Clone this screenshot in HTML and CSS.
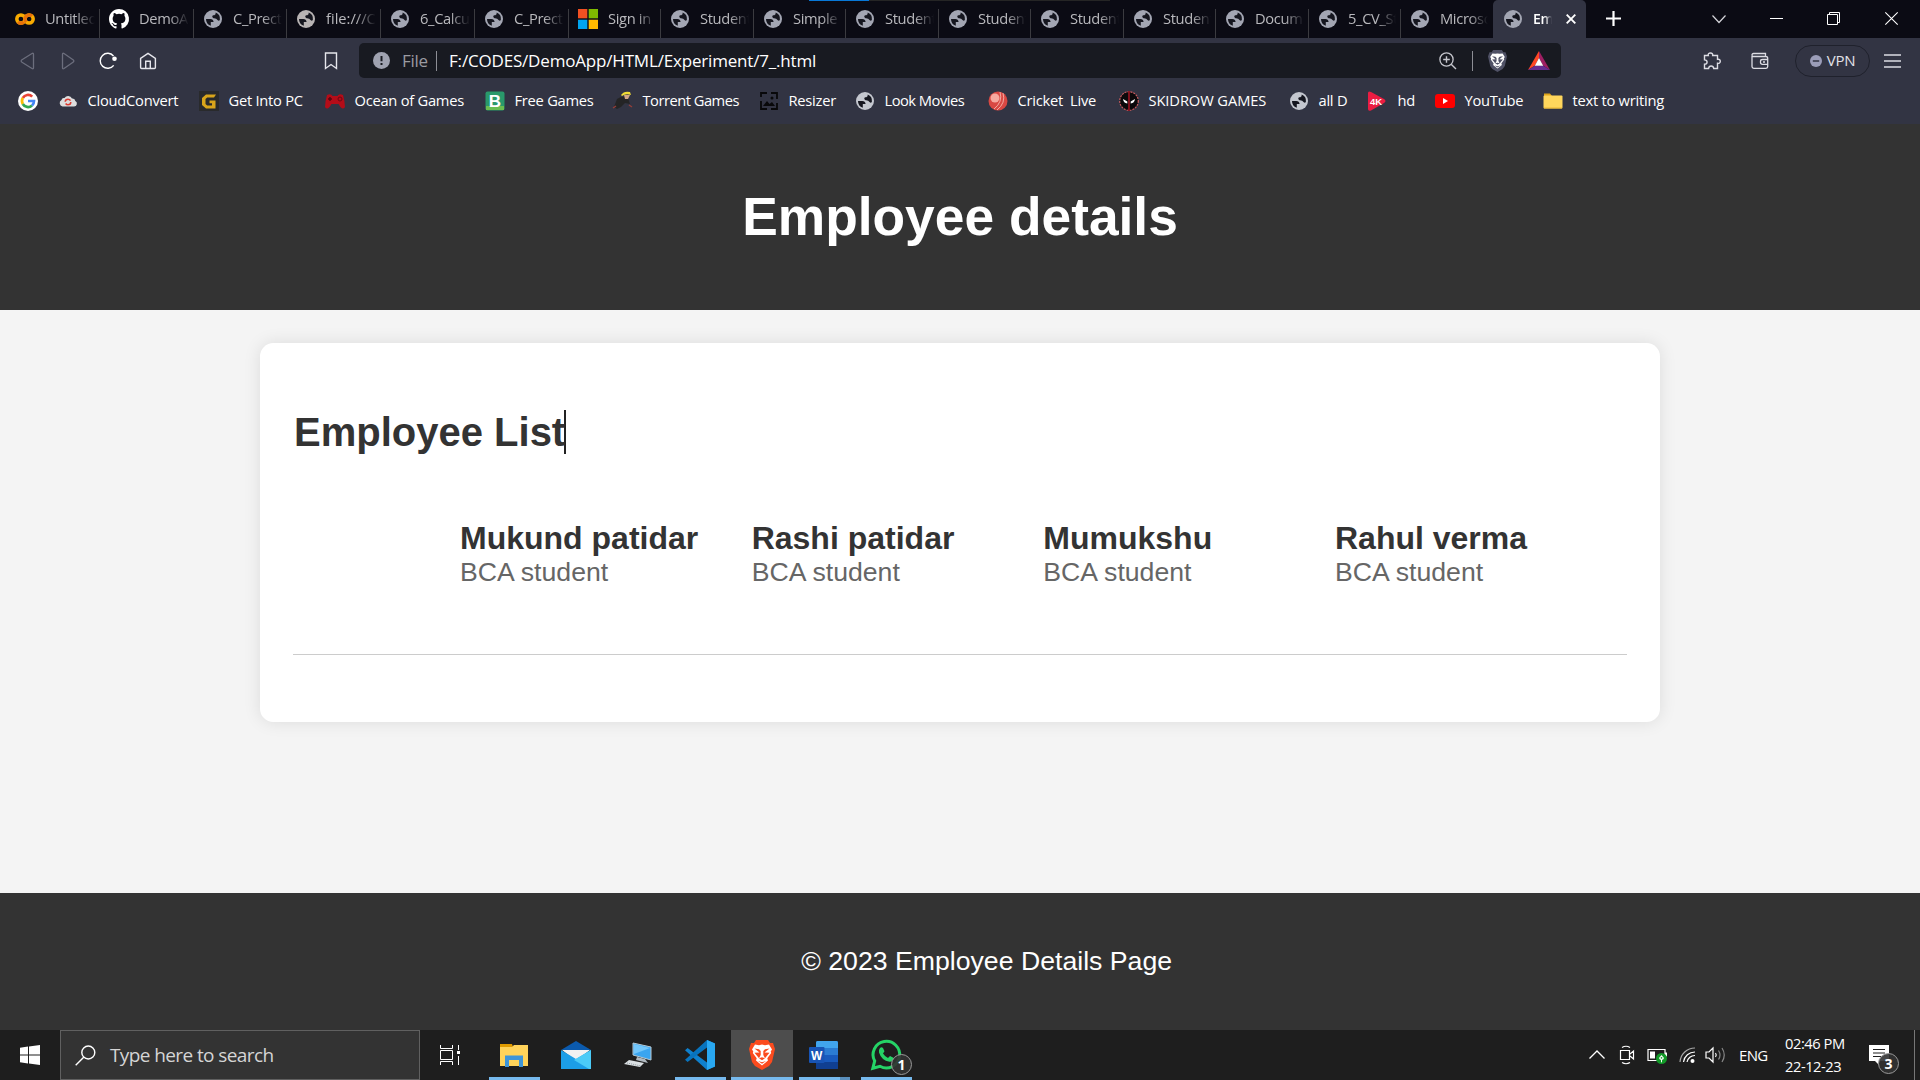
FILE: index.html
```html
<!DOCTYPE html>
<html lang="en">
<head>
<meta charset="utf-8">
<title>Employee details</title>
<link rel="stylesheet" href="styles.css">
</head>
<body>
<svg class="defs" aria-hidden="true">
  <symbol id="globe" viewBox="0 0 18 18">
    <circle cx="9" cy="9" r="9" fill="currentColor"/>
    <path class="globe-cut" d="M2 9H6.300Q9.300 9 9.600 12H6.800V15.700A7 7 0 0 1 2 9ZM11.700 2.500A7 7 0 0 1 15.900 9.800Q15 11.500 13.500 10Q12.500 8 9.500 8.200Q7.300 7 9 5.300H10.300Q12 4.800 11.700 2.500Z"/>
  </symbol>
  <symbol id="lion" viewBox="0 0 26 30">
    <path d="M7 0H19L21 3L24 3L26 9L23 22L20 26L13 30L6 26L3 22L0 9L2 3L5 3Z" fill="currentColor"/>
    <path class="lion-face" d="M6 4.600L10 5.200L13 4.600L16 5.200L20 4.600L23 9.500L21.700 11.500L22.200 13L18.300 18.300L19 20.500L13 25.400L7 20.500L7.700 18.300L3.800 13L4.300 11.500L3 9.500Z"/>
    <path d="M5.500 8.600L10 9.300L11.700 11V15L10 18.300L8 15.700L5.500 12.800L10.500 12.500ZM20.500 8.600L16 9.300L14.300 11V15L16 18.300L18 15.700L20.500 12.800L15.500 12.500ZM10 18.200L13 17.300L16 18.200L13 20.300ZM9 21L13 22.200L17 21L13 23.800Z" fill="currentColor"/>
  </symbol>
</svg>

<div class="browser">
  <div class="tabs">
    <div class="tab"><svg class="tab-icon" viewBox="0 0 20 20"><g fill="none" stroke-width="3.500"><circle cx="5.900" cy="10" r="4.100" stroke="#f9ab00"/><path d="M3 13A4.100 4.100 0 0 0 8.800 13" stroke="#e8710a"/><circle cx="14.100" cy="10" r="4.100" stroke="#f9ab00"/><path d="M11.200 13A4.100 4.100 0 0 1 17 7.100" stroke="#e8710a"/></g></svg><span class="tab-text">Untitled</span></div>
    <div class="tab"><svg class="tab-icon" viewBox="0 0 16 16"><path fill="#fff" d="M8 0C3.580 0 0 3.580 0 8c0 3.540 2.290 6.530 5.470 7.590.4.070.55-.17.55-.38 0-.19-.01-.82-.01-1.490-2.010.37-2.530-.49-2.690-.94-.09-.23-.48-.94-.82-1.130-.28-.15-.68-.52-.01-.53.63-.01 1.080.58 1.230.82.72 1.210 1.870.87 2.330.66.070-.52.28-.87.51-1.070-1.780-.2-3.640-.89-3.640-3.950 0-.87.31-1.590.82-2.150-.08-.2-.36-1.020.08-2.120 0 0 .67-.21 2.200.82a7.600 7.600 0 0 1 4 0c1.530-1.040 2.200-.82 2.200-.82.44 1.100.16 1.920.08 2.120.51.56.82 1.270.82 2.150 0 3.070-1.870 3.750-3.650 3.950.29.25.54.73.54 1.480 0 1.070-.01 1.930-.01 2.200 0 .21.15.46.55.38A8 8 0 0 0 8 0"/></svg><span class="tab-text">DemoApp</span></div>
    <div class="tab"><svg class="tab-icon globe"><use href="#globe"/></svg><span class="tab-text">C_Prectical</span></div>
    <div class="tab"><svg class="tab-icon globe pale"><use href="#globe"/></svg><span class="tab-text wide">file:///C:/</span></div>
    <div class="tab"><svg class="tab-icon globe"><use href="#globe"/></svg><span class="tab-text">6_Calcula</span></div>
    <div class="tab"><svg class="tab-icon globe"><use href="#globe"/></svg><span class="tab-text">C_Prectical</span></div>
    <div class="tab"><svg class="tab-icon" viewBox="0 0 20 20"><path fill="#f25022" d="M0 0h9.300v9.300H0z"/><path fill="#7fba00" d="M10.700 0H20v9.300h-9.300z"/><path fill="#00a4ef" d="M0 10.700h9.300V20H0z"/><path fill="#ffb900" d="M10.700 10.700H20V20h-9.300z"/></svg><span class="tab-text">Sign in</span></div>
    <div class="tab"><svg class="tab-icon globe"><use href="#globe"/></svg><span class="tab-text">Student</span></div>
    <div class="tab"><svg class="tab-icon globe"><use href="#globe"/></svg><span class="tab-text">Simple</span></div>
    <div class="tab"><svg class="tab-icon globe"><use href="#globe"/></svg><span class="tab-text">Student</span></div>
    <div class="tab"><svg class="tab-icon globe"><use href="#globe"/></svg><span class="tab-text">Student</span></div>
    <div class="tab"><svg class="tab-icon globe"><use href="#globe"/></svg><span class="tab-text">Student</span></div>
    <div class="tab"><svg class="tab-icon globe"><use href="#globe"/></svg><span class="tab-text">Student</span></div>
    <div class="tab"><svg class="tab-icon globe"><use href="#globe"/></svg><span class="tab-text">Docum</span></div>
    <div class="tab"><svg class="tab-icon globe"><use href="#globe"/></svg><span class="tab-text">5_CV_St</span></div>
    <div class="tab last"><svg class="tab-icon globe"><use href="#globe"/></svg><span class="tab-text">Microso</span></div>
    <div class="tab active"><svg class="tab-icon globe"><use href="#globe"/></svg><span class="tab-text">Em</span><svg class="tab-close" viewBox="0 0 10 10"><path d="M.7.7l8.600 8.600M9.300.7L.7 9.300" stroke="#fff" stroke-width="1.900"/></svg></div>
    <div class="window-buttons">
      <svg width="15" height="15" viewBox="0 0 15 15"><path d="M7.500 0v15M0 7.500h15" stroke="#fff" stroke-width="2.200"/></svg>
      <svg width="14" height="14" viewBox="0 0 14 14"><path d="M.5 3.500L7 10.500L13.500 3.500" fill="none" stroke="#d5d5da" stroke-width="1.200"/></svg>
      <svg width="13" height="13" viewBox="0 0 13 13"><path d="M0 6.500h13" stroke="#fff"/></svg>
      <svg width="13" height="13" viewBox="0 0 13 13"><path d="M.5 2.500h10v10H.5zM2.500 2.500V.5h10v10h-2" fill="none" stroke="#fff"/></svg>
      <svg width="13" height="13" viewBox="0 0 13 13"><path d="M.3.3l12.400 12.400M12.700.3L.3 12.700" stroke="#fff" stroke-width="1.100"/></svg>
    </div>
  </div>
  <div class="loading-strip"></div>

  <div class="toolbar">
    <div class="nav">
      <svg width="18" height="18" viewBox="0 0 18 18"><path d="M14.500 2.200V15.800Q14.500 17.400 13 16.500L3 10.200Q1.300 9 3 7.800L13 1.500Q14.500.6 14.500 2.200Z" fill="none" stroke="#6c6e7d" stroke-width="1.300"/></svg>
      <svg width="18" height="18" viewBox="0 0 18 18"><path d="M3.500 2.200V15.800Q3.500 17.400 5 16.500L14 10.200Q15.700 9 14 7.800L5 1.500Q3.500.6 3.500 2.200Z" fill="none" stroke="#6c6e7d" stroke-width="1.300"/></svg>
      <svg width="18" height="18" viewBox="0 0 18 18"><path d="M14.700 13.300A7.500 7.500 0 1 1 14.500 4" fill="none" stroke="#fff" stroke-width="1.400"/><circle cx="15.500" cy="6.700" r="2.300" fill="#fff"/></svg>
      <svg width="18" height="18" viewBox="0 0 18 18"><path d="M1.600 6.300L9 1.300L16.400 6.300V15.500Q16.400 16.500 15.400 16.500H2.600Q1.600 16.500 1.600 15.500ZM6.700 16.500V9.300H11.300V16.500" fill="none" stroke="#e6e6ec" stroke-width="1.400"/></svg>
    </div>
    <svg class="save" width="14" height="18" viewBox="0 0 14 18"><path d="M1.500 1h11v15.500L7 12.500L1.500 16.500Z" fill="none" stroke="#e6e6ec" stroke-width="1.400"/></svg>
    <div class="address">
      <svg width="17" height="17" viewBox="0 0 17 17"><circle cx="8.500" cy="8.500" r="8.500" fill="#9fa2b0"/><path d="M8.500 4v5.200M8.500 11v2" stroke="#181a21" stroke-width="2"/></svg>
      <span class="scheme">File</span><i class="divider"></i>
      <span class="url">F:/CODES/DemoApp/HTML/Experiment/7_.html</span>
      <svg class="zoom-icon" width="18" height="18" viewBox="0 0 18 18"><circle cx="7.500" cy="7.500" r="6.600" fill="none" stroke="#c5c6cd" stroke-width="1.300"/><path d="M12.200 12.200L17 17M7.500 4.200v6.600M4.200 7.500h6.600" stroke="#c5c6cd" stroke-width="1.400"/></svg>
      <i class="divider"></i>
      <svg class="shield" width="19" height="22"><use href="#lion"/></svg>
      <svg class="bat" width="22" height="19" viewBox="0 0 22 19"><path d="M11 0L0 19L7 14.500L11 7Z" fill="#ff4724"/><path d="M11 0L22 19L15 14.500L11 7Z" fill="#9e1f63"/><path d="M0 19H22L15 14.500H7Z" fill="#662d91"/><path d="M11 7L6.800 14.700H15.200Z" fill="#fff"/></svg>
    </div>
    <div class="actions">
      <svg width="18" height="18" viewBox="0 0 18 18"><path d="M1.500 3.500H5.300C4.800 1.800 5.800 1 7.500 1S10 2 9.700 3.500H14.500V7.300C16.200 6.900 17.300 7.800 17.300 9.300S16.200 11.700 14.500 11.300V16.500H10.700C10.500 14.700 9.300 14 8.100 14S5.800 14.900 5.600 16.500H1.500V12.200C3.300 12.200 4.100 11.200 4.100 10S3.300 8 1.500 7.900Z" fill="none" stroke="#dcdce3" stroke-width="1.400"/></svg>
      <svg width="18" height="18" viewBox="0 0 18 18"><path d="M1 4V14.500Q1 16.300 2.800 16.300H15Q16.700 16.300 16.700 14.500V6.500Q16.700 4.500 15 4.500H2Q1 4.500 1 3T2.500 1.500H14.500V4.500M16.700 7.500H11.500Q9.500 7.500 9.500 9.300V10.500Q9.500 12.300 11.500 12.300H16.700M12 10H14" fill="none" stroke="#dcdce3" stroke-width="1.300"/></svg>
      <div class="vpn"><svg width="12" height="12" viewBox="0 0 12 12"><circle cx="6" cy="6" r="6" fill="#9b9db8"/><path d="M2.800 6h6.400" stroke="#323443" stroke-width="1.500"/></svg><span>VPN</span></div>
      <svg width="17" height="14" viewBox="0 0 17 14"><path d="M0 1h17M0 7h17M0 13h17" stroke="#dcdce3" stroke-width="1.300"/></svg>
    </div>
  </div>

  <div class="bookmarks">
    <div class="mark"><svg viewBox="0 0 20 20"><circle cx="10" cy="10" r="10" fill="#fff"/><g fill="none" stroke-width="2.700"><path d="M14.200 5.600A6 6 0 0 0 4.800 7" stroke="#ea4335"/><path d="M4.800 7A6 6 0 0 0 4.800 13" stroke="#fbbc05"/><path d="M4.800 13A6 6 0 0 0 14 14.500" stroke="#34a853"/><path d="M14 14.500A6 6 0 0 0 16 10H10" stroke="#4285f4"/></g></svg></div>
    <div class="mark"><svg viewBox="0 0 20 20"><path d="M4.500 15.500A3.500 3.500 0 0 1 3.500 9Q4 6.500 6.500 7A4.300 4.300 0 0 1 14 7.500Q17 7 17.300 10A2.900 2.900 0 0 1 16 15.500Z" fill="#dedede"/><circle cx="10" cy="11" r="2.800" fill="none" stroke="#db3b32" stroke-width="1.500" stroke-dasharray="7 1.800"/></svg><span>CloudConvert</span></div>
    <div class="mark"><svg viewBox="0 0 20 20"><path d="M0 0h20v20H0z" fill="#292a2c"/><path d="M17 3.500H7L3 7V14L7 17.500H16.500V9.500H10.500V12.300H13V14.500H8.200L6.500 13V8L8.200 6.500H15Z" fill="#d9a51b"/></svg><span>Get Into PC</span></div>
    <div class="mark"><svg viewBox="0 0 20 20"><path d="M2 4Q6 2 7.500 5H12.500Q14 2 18 4Q19.800 10 20 16Q18 19 15.500 16L13.500 13H6.500L4.500 16Q2 19 0 16Q.2 10 2 4Z" fill="#b40c18"/><path d="M5 6v4M3 8h4" stroke="#570712" stroke-width="1.500"/><circle cx="15" cy="8" r="2" fill="none" stroke="#6a0814"/></svg><span>Ocean of Games</span></div>
    <div class="mark"><svg viewBox="0 0 20 20"><rect x=".5" y=".5" width="19" height="19" rx="2" fill="#29996b"/><path d="M1 15H19V19H1Z" fill="#68bd50"/><text x="10" y="16" text-anchor="middle" class="glyph b">B</text></svg><span>Free Games</span></div>
    <div class="mark tight"><svg viewBox="0 0 20 20"><path d="M1 16L4 8Q10 4 15 7L17 13L12 12L8 16L4 18Z" fill="#242425"/><path d="M8 4Q11-.5 17 1L18 4Q13 2 9 5Z" fill="#f0db35"/><path d="M11 4H17L15 8H12Z" fill="#d3a787"/><path d="M0 17L3 15M16 14L19 16" stroke="#943e38" stroke-width="1.500"/></svg><span>Torrent Games</span></div>
    <div class="mark"><svg viewBox="0 0 20 20"><path d="M2 6V2H8M12 2H18V8M18 12V18H12M8 18H2V10" fill="none" stroke="#08080a" stroke-width="1.800"/><path d="M4 15L8 10L10.500 13L13 11L16 15Z" fill="#08080a"/><circle cx="13" cy="7" r="1.500" fill="#08080a"/></svg><span>Resizer</span></div>
    <div class="mark tight"><svg class="globe light"><use href="#globe"/></svg><span>Look Movies</span></div>
    <div class="mark"><svg viewBox="0 0 20 20"><circle cx="10" cy="10" r="9.500" fill="#d94843"/><circle cx="7" cy="7" r="4.500" fill="#f6aaa0"/><path d="M12 1Q15 11 6 18M15 2Q18 12 9 19" fill="none" stroke="#f7c3b9" stroke-width=".8"/></svg><span>Cricket&nbsp; Live</span></div>
    <div class="mark loose"><svg viewBox="0 0 20 20"><circle cx="10" cy="10" r="9.300" fill="#0b090b" stroke="#c85b5e" stroke-width="1.200" stroke-dasharray="2 1"/><path d="M10 0V20" stroke="#8c1420" stroke-width="1.800"/><path d="M4 8L8.300 10.500V12.500Q4.500 12 4 8M16 8L11.700 10.500V12.500Q15.500 12 16 8" fill="#fff"/></svg><span>SKIDROW GAMES</span></div>
    <div class="mark"><svg class="globe light"><use href="#globe"/></svg><span>all D</span></div>
    <div class="mark"><svg viewBox="0 0 20 20"><path d="M0 2Q0-.5 3 1L16 8Q19 10 16 12L3 19.500Q0 20.500 0 18Z" fill="#eb1c42"/><text x="8" y="13.500" text-anchor="middle" class="glyph k">4K</text></svg><span>hd</span></div>
    <div class="mark"><svg viewBox="0 0 20 20"><rect x="0" y="3" width="20" height="14" rx="3" fill="red"/><path d="M8 7V13L13 10Z" fill="#fff"/></svg><span>YouTube</span></div>
    <div class="mark"><svg viewBox="0 0 20 20"><path d="M1 2.500H7L9 5H18V9H1Z" fill="#dfa51b"/><rect x=".5" y="4.500" width="19" height="13" rx="1" fill="#ffd65c"/><path d="M1 17h18" stroke="#e9b532"/></svg><span>text to writing</span></div>
  </div>
</div>

<div class="page">
  <header class="page-header"><h1>Employee details</h1></header>
  <main class="card">
    <h2><span class="typed">Employee List</span></h2>
    <div class="employees">
      <div class="employee"><h3>Mukund patidar</h3><p>BCA student</p></div>
      <div class="employee"><h3>Rashi patidar</h3><p>BCA student</p></div>
      <div class="employee"><h3>Mumukshu</h3><p>BCA student</p></div>
      <div class="employee"><h3>Rahul verma</h3><p>BCA student</p></div>
    </div>
  </main>
  <footer class="page-footer"><p>© 2023 Employee Details Page</p></footer>
</div>

<div class="taskbar">
  <div class="start"><svg width="20" height="20" viewBox="0 0 20 20"><path fill="#fff" d="M0 2.700L8 1.600V9.500H0ZM9 1.400L20 0V9.500H9ZM0 10.500H8V18.400L0 17.300ZM9 10.500H20V20L9 18.600Z"/></svg></div>
  <div class="search"><svg width="21" height="21" viewBox="0 0 21 21"><circle cx="13.300" cy="7.500" r="6.500" fill="none" stroke="#fff" stroke-width="1.400"/><path d="M8.700 12.200L.7 20.300" stroke="#fff" stroke-width="1.400"/></svg><span>Type here to search</span></div>
  <div class="task-view"><svg width="20" height="20" viewBox="0 0 20 20"><path d="M.5 0V3.500H12.500V0M.5 20V16.500H12.500V20M.5 5.500H12.500V14.500H.5ZM18.500 0V5M18.500 11V20" fill="none" stroke="#fff"/><path d="M17 6h3v3h-3z" fill="#fff"/></svg></div>
  <div class="apps">
    <div class="app open"><svg width="28" height="24" viewBox="0 0 28 24"><path d="M0 1H12L13 4H0Z" fill="#e09b00"/><path d="M0 4H12L14 2H28V23H0Z" fill="#ffd35a"/><path d="M5 24V12.500H23V24H19V17H9V24Z" fill="#3e95d8"/></svg></div>
    <div class="app"><svg width="30" height="28" viewBox="0 0 30 28"><path d="M0 9L15 0L30 9Z" fill="#0b5aad"/><path d="M1 9H29L15 20Z" fill="#f1f1f2"/><path d="M0 9L15 18L30 9V28H0Z" fill="#1c9ee7"/><path d="M30 9L13 19L28 28H30Z" fill="#4bcbf7"/></svg></div>
    <div class="app"><svg width="28" height="26" viewBox="0 0 28 26"><path d="M9 1L27 5V18L9 13Z" fill="#3aa5f0" stroke="#b7cad5"/><path d="M10 2L26 6L10 12Z" fill="#73c7fb"/><path d="M13 15L21 17L24 21L12 18Z" fill="#b1bac1"/><path d="M5 18L20 21L16 25L0 22Z" fill="#dbe0e3"/><path d="M3 21L17 24" stroke="#8f999f" stroke-dasharray="1 1"/></svg></div>
    <div class="app open"><svg width="30" height="30" viewBox="0 0 30 30"><path d="M22 0L30 3.500V26.500L22 30L2 12L0 10.200L2.600 8L22 22.500Z" fill="#0f80cd"/><path d="M22 0V7.500L2.600 22L0 19.800L2 18Z" fill="#0873bd"/><path d="M22 0L30 3.500V26.500L22 30Z" fill="#29a8f2"/></svg></div>
    <div class="app open current"><svg class="brave" width="26" height="30"><use href="#lion"/></svg></div>
    <div class="app open stacked"><svg width="30" height="28" viewBox="0 0 30 28"><rect x="7" width="22" height="28" rx="1.500" fill="#185abd"/><path d="M7 7V1.500Q7 0 8.500 0H27.500Q29 0 29 1.500V7Z" fill="#41a5ee"/><path d="M7 7h22v7H7z" fill="#2b7cd3"/><path d="M7 21h22v5.500q0 1.500-1.500 1.500h-19Q7 28 7 26.500z" fill="#103f91"/><rect y="6" width="15.500" height="16" rx="1" fill="#1854b5"/><text x="7.700" y="18.500" text-anchor="middle" class="glyph w">W</text></svg></div>
    <div class="app open"><svg width="30" height="30" viewBox="0 0 30 30"><path d="M1.800 28.300L3.700 21A13.300 13.300 0 1 1 9 26.300Z" fill="none" stroke="#25d366" stroke-width="3"/><path d="M9 8Q10.500 6.500 12 8L13.500 11.300L12 13.500Q14 16.700 17 18L19 16L22.500 17.800Q23 21.500 18.500 21.800Q10.500 20.500 8 12.500Q7.500 9.700 9 8Z" fill="#25d366"/></svg><b class="badge">1</b></div>
  </div>
  <div class="tray">
    <svg width="18" height="18" viewBox="0 0 18 18"><path d="M1.500 12.500L9 5L16.500 12.500" fill="none" stroke="#fff" stroke-width="1.300"/></svg>
    <svg width="16" height="20" viewBox="0 0 16 20"><path d="M1.500 5.500H10.500V14.500H1.500ZM11 9L14.500 6V14L11 11M3 2.500Q7 0 11 2.500M3 17.500Q7 20 11 17.500" fill="none" stroke="#fff" stroke-width="1.200"/></svg>
    <svg width="21" height="20" viewBox="0 0 21 20"><path d="M1 4.500H18V15.500H1Z" fill="none" stroke="#fff" stroke-width="1.200"/><path d="M3 6.500h5v7H3zM18 7.500h2v4h-2z" fill="#fff"/><circle cx="14.500" cy="13.500" r="5.500" fill="#129a28"/><path d="M14.500 10L17 13Q16.500 15 14.500 15T12 13Z" fill="#fff"/><path d="M14.500 14v3.300" stroke="#fff"/><circle cx="14.500" cy="12.800" r=".9" fill="#129a28"/></svg>
    <svg width="17" height="18" viewBox="0 0 17 18"><g fill="none" stroke="#fff" stroke-width="1.200"><path d="M1 16A15 15 0 0 1 16 2" stroke="#a7a7a7"/><path d="M4.500 16A11.500 11.500 0 0 1 16 6"/><path d="M8 16A8 8 0 0 1 16 9.500"/></g><circle cx="13.500" cy="15" r="2" fill="#fff"/></svg>
    <svg width="21" height="18" viewBox="0 0 21 18"><path d="M1 6H4L8 2V16L4 12H1ZM10.500 7Q12 9 10.500 11" fill="none" stroke="#fff" stroke-width="1.200"/><path d="M13.500 4.500Q16.500 9 13.500 13.500M17 2Q21.500 9 17 16" fill="none" stroke="#888" stroke-width="1.200"/></svg>
    <span class="lang">ENG</span>
    <div class="clock"><span>02:46 PM</span><span>22-12-23</span></div>
    <div class="notices"><svg width="21" height="21" viewBox="0 0 21 21"><path d="M0 0H20V16H10L10 20L6 16H0Z" fill="#fff"/><path d="M4 4.500H16M4 8H16M4 11.500H12" stroke="#1e1e1e"/></svg><b class="badge">3</b></div>
    <i class="show-desktop"></i>
  </div>
</div>
</body>
</html>
```

FILE: styles.css
```css
* { box-sizing: border-box; }
body {
  margin: 0;
  width: 1920px;
  height: 1080px;
  overflow: hidden;
  display: flex;
  flex-direction: column;
  background: #f4f4f4;
  font-family: "Open Sans", "Noto Sans", sans-serif;
}
svg { display: block; flex: none; overflow: visible; }
.defs { position: absolute; width: 0; height: 0; }

/* Browser frame */
.browser { height: 124px; flex: none; background: #323443; color: #fff; position: relative; }
.tabs {
  height: 38px;
  display: grid;
  grid-template-columns: 100px 94px 93px 94px 94px 94px 92px 93px 92px 93px 92px 93px 92px 93px 92px 92px 93px 1fr;
  background: #0b0b14;
}
.tab {
  display: flex;
  align-items: center;
  padding: 0 5px 0 9px;
  background: linear-gradient(#3b3b40, #3b3b40) right 9px / 1px 29px no-repeat;
  min-width: 0;
}
.tab:first-child { padding-left: 15px; }
.tab.last { background: none; }
.tab-icon { width: 20px; height: 20px; }
.tab-icon.globe { width: 18px; height: 18px; margin: 0 1px; }
.globe { color: #a3a6b3; }
.globe.pale { color: #b8b4b4; }
.globe.light { color: #c4c7cf; }
.globe-cut { fill: #15161f; }
.tab-text {
  flex: 1;
  margin-left: 10px;
  padding-bottom: 2px;
  overflow: hidden;
  white-space: nowrap;
  font-size: 14.7px;
  letter-spacing: -0.35px;
  color: #b9b9bd;
  -webkit-mask-image: linear-gradient(90deg, #000 60%, transparent);
  mask-image: linear-gradient(90deg, #000 60%, transparent);
}
.tab-text.wide { letter-spacing: 0; }
.tab.active { background: #323443; border-radius: 5px 5px 0 0; padding-left: 10px; padding-right: 10px; }
.active .tab-text { flex: 0 0 19px; color: #fff; font-weight: 600; font-size: 14px; }
.tab-close { width: 10px; height: 10px; margin-left: auto; }
.window-buttons { display: flex; align-items: center; padding: 0 0 1px 20px; }
.window-buttons svg:nth-child(2) { margin-left: 91px; }
.window-buttons svg:nth-child(3) { margin-left: 44px; }
.window-buttons svg:nth-child(n+4) { margin-left: 44px; }
.window-buttons svg:nth-child(5) { margin-left: 45px; }
.loading-strip {
  position: absolute;
  left: 809px;
  top: 0;
  width: 301px;
  height: 1px;
  background: linear-gradient(90deg, #0878d7 60px, #252525 60px);
}
.toolbar { height: 45px; display: flex; align-items: center; }
.nav { display: flex; gap: 22px; padding-left: 19px; width: 324px; }
.save { margin-right: 21px; }
.address {
  width: 1202px;
  height: 35px;
  border-radius: 5px;
  background: #181a21;
  display: flex;
  align-items: center;
  padding: 0 11px 0 14px;
  font-size: 17px;
}
.scheme { color: #9b9ba1; margin-left: 12px; width: 25px; letter-spacing: -0.3px; }
.divider { width: 1px; height: 20px; background: #8d8e95; margin-left: 9px; }
.url { margin-left: 12px; letter-spacing: -0.18px; white-space: nowrap; }
.zoom-icon { margin-left: auto; }
.zoom-icon + .divider { margin-left: 15px; }
.shield { color: #4f5165; margin-left: 15px; }
.lion-face { fill: #fff; }
.bat { margin-left: 21px; }
.actions { display: flex; align-items: center; padding-left: 142px; }
.actions > svg + svg { margin-left: 30px; }
.vpn {
  display: flex;
  align-items: center;
  justify-content: center;
  gap: 5px;
  width: 75px;
  height: 32px;
  margin: 0 14px 0 26px;
  border: 1px solid #1f212c;
  border-radius: 16px;
  color: #e2e2e9;
  font-size: 15px;
  letter-spacing: -0.3px;
}
.vpn span { padding-bottom: 2px; }
.bookmarks {
  height: 36px;
  padding-left: 18px;
  display: grid;
  grid-template-columns: 40px 141px 126px 160px 128px 146px 96px 133px 131px 170px 79px 67px 108px 130px;
  align-items: center;
}
.mark { display: flex; align-items: center; gap: 9.5px; white-space: nowrap; font-size: 14.7px; letter-spacing: -0.25px; }
.mark span { padding-bottom: 2px; }
.mark.tight { letter-spacing: -0.5px; }
.mark.loose { letter-spacing: -0.1px; }
.mark svg { width: 20px; height: 20px; }
.mark svg.globe { width: 18px; height: 18px; margin: 0 1px; }
.glyph { font-family: "Liberation Sans", sans-serif; font-weight: bold; fill: #fff; letter-spacing: 0; }
.glyph.b { font-size: 17px; }
.glyph.k { font-size: 9.5px; }
.glyph.w { font-size: 12px; }

/* Web page */
.page {
  flex: 1;
  display: flex;
  flex-direction: column;
  align-items: center;
  background: #f4f4f4;
  font-family: "Liberation Sans", Arial, sans-serif;
  font-size: 26.667px;
}
.page h1, .page h2, .page h3, .page p { margin: 0; }
.page-header {
  width: 100%;
  height: 186px;
  display: flex;
  align-items: center;
  justify-content: center;
  padding-bottom: 2px;
  background: #333;
  color: #fff;
}
.page-header h1 { font-size: 53.333px; line-height: 61px; }
.card {
  width: 1400px;
  height: 379px;
  margin-top: 33px;
  padding: 67px 33px 0;
  background: #fff;
  border-radius: 13.333px;
  box-shadow: 0 0 16.667px rgba(0, 0, 0, 0.1);
  color: #333;
}
.card h2 { font-size: 40px; line-height: 45px; padding-left: 1px; }
.typed { border-right: 2px solid #222; display: inline-block; width: 272px; height: 44px; white-space: nowrap; }
.employees {
  height: 200px;
  display: flex;
  padding: 65px 0 0 167px;
  border-bottom: 1px solid #ccc;
}
.employee { width: 291.667px; flex: none; }
.employee h3 { font-size: 32px; line-height: 37px; white-space: nowrap; }
.employee p { color: #666; line-height: 30px; }
.page-footer {
  width: 100%;
  height: 137px;
  margin-top: auto;
  padding-left: 53.333px;
  display: flex;
  align-items: center;
  justify-content: center;
  background: #333;
  color: #fff;
}

/* Taskbar */
.taskbar { height: 50px; flex: none; display: flex; background: #1e1e1e; color: #fff; }
.start { width: 60px; display: grid; place-items: center; }
.search {
  width: 360px;
  border: 1px solid #606060;
  background: #333;
  display: flex;
  align-items: center;
  gap: 14px;
  padding-left: 14px;
  color: #d5d5d5;
  font-size: 19px;
  letter-spacing: -0.6px;
}
.task-view { width: 60px; display: grid; place-items: center; }
.apps { display: grid; grid-template-columns: repeat(7, 62px); padding-left: 3px; }
.app { position: relative; display: grid; place-items: center; }
.app.open { background: linear-gradient(#76b9ed, #76b9ed) center bottom / 51px 3px no-repeat; }
.app.current { background-color: #4d4d4d; background-size: 100% 3px; }
.app.stacked { background-image: linear-gradient(90deg, #76b9ed 41px, #5a8fbc 41px); }
.brave { color: #fb4b1e; }
.badge {
  position: absolute;
  width: 21px;
  height: 21px;
  border: 1px solid #999;
  border-radius: 50%;
  background: rgba(50, 50, 50, 0.9);
  color: #fff;
  font-size: 14px;
  line-height: 19px;
  text-align: center;
  left: 36px;
  top: 24px;
}
.tray { margin-left: auto; display: flex; align-items: center; }
.tray > svg { margin-right: 13px; }
.tray > svg:nth-of-type(2) { margin-right: 12px; }
.tray > svg:nth-of-type(3) { margin-right: 11px; }
.tray > svg:nth-of-type(4) { margin-right: 9px; }
.lang { width: 29px; font-size: 15px; letter-spacing: -0.7px; }
.clock { width: 62px; margin-left: 17px; display: flex; flex-direction: column; font-size: 14.7px; line-height: 23px; letter-spacing: -0.45px; white-space: nowrap; }
.notices { position: relative; margin-left: 22px; }
.notices .badge { left: 9px; top: 8px; }
.show-desktop { width: 6px; height: 50px; margin-left: 24px; border-left: 1px solid #777; }
```
